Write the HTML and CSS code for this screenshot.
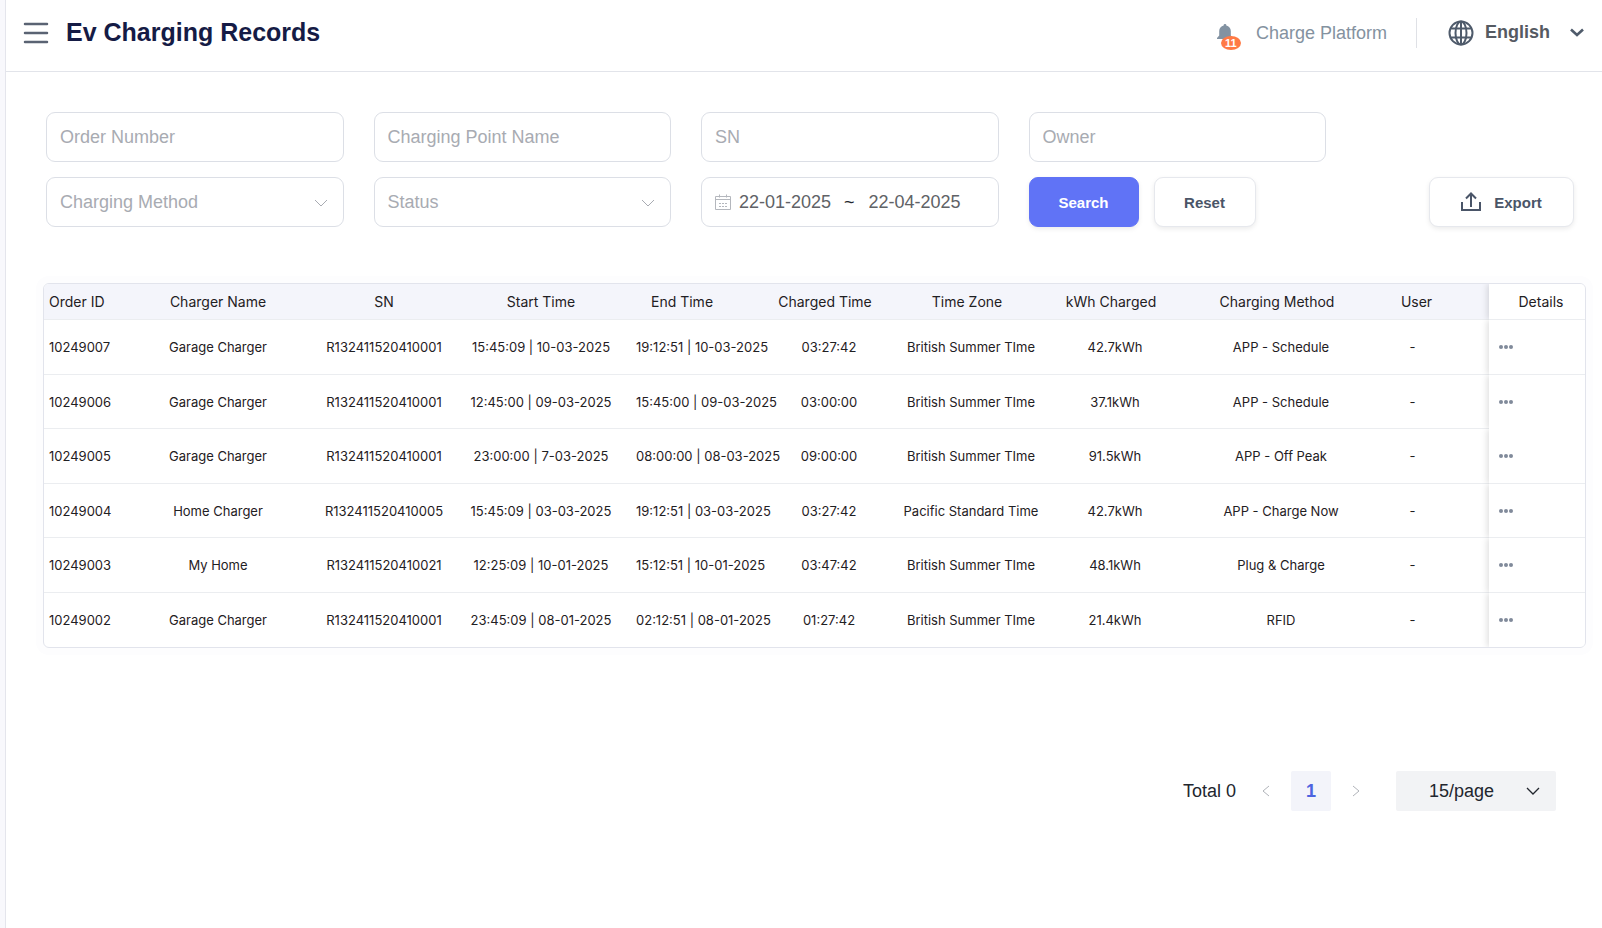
FILE: index.html
```
<!DOCTYPE html>
<html lang="en">
<head>
  <meta charset="UTF-8" />
  <meta name="viewport" content="width=device-width, initial-scale=1.0" />
  <title>Ev Charging Records</title>
  <link rel="stylesheet" href="styles.css">
</head>
<body>
  <header class="topbar">
    <button class="icon-btn menu-btn" aria-label="Toggle menu">
      <svg width="26" height="22" viewBox="0 0 26 22" fill="none" stroke="#5a6373" stroke-width="2.500" stroke-linecap="round"><path d="M2 2h22M2 11h22M2 20h22"/></svg>
    </button>
    <h1>Ev Charging Records</h1>
    <button class="icon-btn bell" aria-label="Notifications">
      <svg width="18" height="18" viewBox="0 0 18 18" fill="#8292a2"><path d="M9 0a1.3 1.3 0 0 1 1.3 1.5C13 2 14.800 4.300 14.800 7v4.600L17 14v1H1v-1l2.200-2.400V7C3.200 4.300 5 2 7.700 1.500A1.300 1.300 0 0 1 9 0z"/></svg>
      <span class="badge">11</span>
    </button>
    <a href="#" class="account">Charge Platform</a>
    <button class="icon-btn language">
      <svg width="26" height="26" viewBox="0 0 26 26" fill="none" stroke="#4f5b6b" stroke-width="2"><circle cx="13" cy="13" r="11.500"/><ellipse cx="13" cy="13" rx="5.500" ry="11.500"/><path d="M13 1.500v23M2.500 8.500h21M2.500 17.500h21"/></svg>
      <span>English</span>
      <svg class="caret" width="14" height="10" viewBox="0 0 14 10" fill="none" stroke="#4f5b6b" stroke-width="2.600"><path d="M1 1.500l6 5.500 6-5.500"/></svg>
    </button>
  </header>

  <main>
    <form class="filters" onsubmit="return false">
      <input type="text" class="field" placeholder="Order Number" aria-label="Order Number" />
      <input type="text" class="field" placeholder="Charging Point Name" aria-label="Charging Point Name" />
      <input type="text" class="field" placeholder="SN" aria-label="SN" />
      <input type="text" class="field" placeholder="Owner" aria-label="Owner" />

      <div class="select-wrap first-col">
        <select class="field" aria-label="Charging Method">
          <option>Charging Method</option>
        </select>
        <svg width="14" height="8" viewBox="0 0 14 8" fill="none" stroke="#a8abb2"><path d="M1 1l6 6 6-6"/></svg>
      </div>
      <div class="select-wrap">
        <select class="field" aria-label="Status">
          <option>Status</option>
        </select>
        <svg width="14" height="8" viewBox="0 0 14 8" fill="none" stroke="#a8abb2"><path d="M1 1l6 6 6-6"/></svg>
      </div>
      <div class="field date-range">
        <svg width="16" height="16" viewBox="0 0 16 16" fill="none" stroke="#b4b7bd"><path d="M.5 2.500h15v13h-15zM.5 5.500h15M4.500 .5v3M11.500 .5v3M4 9.500h2M7 9.500h2M10 9.500h2M4 12.500h2M7 12.500h2M10 12.500h2"/></svg>
        <input type="text" value="22-01-2025" aria-label="Start date" />
        <span>~</span>
        <input type="text" value="22-04-2025" aria-label="End date" />
      </div>
      <div class="actions">
        <button class="btn btn-primary">Search</button>
        <button class="btn btn-reset" type="reset">Reset</button>
      </div>
      <button class="btn btn-export" type="button">
        <svg width="20" height="20" viewBox="0 0 20 20" fill="none" stroke="#4a5568" stroke-width="2"><path d="M1 10v8h18v-8M10 15V2M5 6.500L10 1.500l5 5"/></svg>
        Export
      </button>
    </form>

    <div class="table-card">
      <table>
        <colgroup>
          <col class="c-id"><col class="c-name"><col class="c-sn"><col class="c-start"><col class="c-end"><col class="c-charged"><col class="c-zone"><col class="c-kwh"><col class="c-method"><col class="c-user"><col class="c-details">
        </colgroup>
        <thead>
          <tr>
            <th>Order ID</th>
            <th>Charger Name</th>
            <th>SN</th>
            <th>Start Time</th>
            <th class="end">End Time</th>
            <th class="shift">Charged Time</th>
            <th class="shift">Time Zone</th>
            <th class="shift">kWh Charged</th>
            <th class="shift">Charging Method</th>
            <th class="user">User</th>
            <th class="details">Details</th>
          </tr>
        </thead>
        <tbody>
          <tr>
            <td>10249007</td><td>Garage Charger</td><td>R132411520410001</td><td>15:45:09 | 10-03-2025</td><td class="end">19:12:51 | 10-03-2025</td><td>03:27:42</td><td>British Summer TIme</td><td>42.7kWh</td><td>APP - Schedule</td><td class="user">-</td>
            <td class="details"><button class="more" aria-label="Details"><i></i><i></i><i></i></button></td>
          </tr>
          <tr class="open-row">
            <td>10249006</td><td>Garage Charger</td><td>R132411520410001</td><td>12:45:00 | 09-03-2025</td><td class="end">15:45:00 | 09-03-2025</td><td>03:00:00</td><td>British Summer TIme</td><td>37.1kWh</td><td>APP - Schedule</td><td class="user">-</td>
            <td class="details"><button class="more" aria-label="Details"><i></i><i></i><i></i></button></td>
          </tr>
          <tr>
            <td>10249005</td><td>Garage Charger</td><td>R132411520410001</td><td>23:00:00 | 7-03-2025</td><td class="end">08:00:00 | 08-03-2025</td><td>09:00:00</td><td>British Summer TIme</td><td>91.5kWh</td><td>APP - Off Peak</td><td class="user">-</td>
            <td class="details"><button class="more" aria-label="Details"><i></i><i></i><i></i></button></td>
          </tr>
          <tr>
            <td>10249004</td><td>Home Charger</td><td>R132411520410005</td><td>15:45:09 | 03-03-2025</td><td class="end">19:12:51 | 03-03-2025</td><td>03:27:42</td><td>Pacific Standard Time</td><td>42.7kWh</td><td>APP - Charge Now</td><td class="user">-</td>
            <td class="details"><button class="more" aria-label="Details"><i></i><i></i><i></i></button></td>
          </tr>
          <tr>
            <td>10249003</td><td>My Home</td><td>R132411520410021</td><td>12:25:09 | 10-01-2025</td><td class="end">15:12:51 | 10-01-2025</td><td>03:47:42</td><td>British Summer TIme</td><td>48.1kWh</td><td>Plug &amp; Charge</td><td class="user">-</td>
            <td class="details"><button class="more" aria-label="Details"><i></i><i></i><i></i></button></td>
          </tr>
          <tr>
            <td>10249002</td><td>Garage Charger</td><td>R132411520410001</td><td>23:45:09 | 08-01-2025</td><td class="end">02:12:51 | 08-01-2025</td><td>01:27:42</td><td>British Summer TIme</td><td>21.4kWh</td><td>RFID</td><td class="user">-</td>
            <td class="details"><button class="more" aria-label="Details"><i></i><i></i><i></i></button></td>
          </tr>
        </tbody>
      </table>
    </div>

    <nav class="pagination" aria-label="Pagination">
      <span class="total">Total 0</span>
      <button class="page-arrow" aria-label="Previous page">
        <svg width="8" height="12" viewBox="0 0 8 12" fill="none" stroke="#b0b3b9"><path d="M7 1L1 6l6 5"/></svg>
      </button>
      <button class="page-num">1</button>
      <button class="page-arrow" aria-label="Next page">
        <svg width="8" height="12" viewBox="0 0 8 12" fill="none" stroke="#b0b3b9"><path d="M1 1l6 5-6 5"/></svg>
      </button>
      <div class="page-size">
        <select aria-label="Rows per page">
          <option>15/page</option>
        </select>
        <svg width="14" height="8" viewBox="0 0 14 8" fill="none" stroke="#22262e" stroke-width="1.300"><path d="M1 1l6 6 6-6"/></svg>
      </div>
    </nav>
  </main>
</body>
</html>
```
FILE: styles.css
```
* {
  box-sizing: border-box;
}
html {
  background: #f8f8fc;
}
body {
  margin: 0 0 0 5px;
  min-height: 100vh;
  border-left: 1px solid #e4e5ec;
  background: #fff;
  font-family: "Liberation Sans", Arial, sans-serif;
  font-size: 18px;
  color: #22262e;
}
button, input, select {
  font-family: inherit;
  font-size: inherit;
}

/* top bar */
.topbar {
  display: flex;
  align-items: center;
  height: 72px;
  padding: 0 18px 6px 17px;
  border-bottom: 1px solid #e2e4ea;
}
h1 {
  margin: 0 auto 0 17px;
  font-size: 25px;
  color: #151b45;
}
.icon-btn {
  padding: 0;
  border: none;
  background: none;
  cursor: pointer;
}
.menu-btn svg {
  display: block;
}
.bell {
  position: relative;
  margin-right: 22px;
}
.bell svg {
  display: block;
}
.badge {
  position: absolute;
  left: 5px;
  top: 12px;
  width: 20px;
  height: 14px;
  border-radius: 50%;
  background: #ff7a45;
  color: #fff;
  font-size: 11px;
  font-weight: bold;
  line-height: 14px;
}
.account {
  padding-right: 29px;
  border-right: 1px solid #dfe1e6;
  line-height: 30px;
  color: #8492a0;
  text-decoration: none;
}
.language {
  display: flex;
  align-items: center;
  margin-left: 31px;
  font-weight: bold;
  color: #555a62;
}
.language span {
  margin: 0 20px 0 11px;
}

/* filters */
.filters {
  display: grid;
  grid-template-columns: repeat(4, minmax(0, 1fr)) 218px;
  gap: 15px 30px;
  padding: 40px 28px 0 40px;
}
.field {
  width: 100%;
  height: 50px;
  padding: 0 13px;
  border: 1px solid #dcdfe6;
  border-radius: 9px;
  background: #fff;
  color: #a8abb2;
}
.field::placeholder {
  color: #a8abb2;
}
.first-col {
  grid-column: 1;
}
.select-wrap, .page-size {
  position: relative;
}
select {
  appearance: none;
}
.select-wrap svg {
  position: absolute;
  right: 16px;
  top: 22px;
  pointer-events: none;
}
.date-range {
  display: flex;
  align-items: center;
  color: #22262e;
}
.date-range input {
  width: 94px;
  padding: 0;
  border: none;
  color: #606266;
}
.date-range svg {
  margin-right: 8px;
}
.date-range span {
  margin: 0 14px 0 11px;
}
.actions {
  display: flex;
  gap: 15px;
}
.btn {
  height: 50px;
  border: 1px solid #e6e8ed;
  border-radius: 9px;
  background: #fff;
  box-shadow: 0 2px 5px rgba(0, 0, 0, 0.08);
  color: #4a5568;
  font-size: 15px;
  font-weight: bold;
  cursor: pointer;
}
.btn-primary {
  width: 110px;
  border-color: #6073f6;
  background: #6073f6;
  color: #fff;
}
.btn-reset {
  width: 102px;
}
.btn-export {
  display: flex;
  align-items: center;
  justify-content: center;
  gap: 13px;
  width: 145px;
  justify-self: end;
}

/* records table */
.table-card {
  margin: 56px 16px 0 37px;
  border: 1px solid #e2e4ec;
  border-radius: 6px;
  box-shadow: 0 0 0 7px #fdfdfe;
  overflow: hidden;
}
table {
  width: 100%;
  table-layout: fixed;
  border-collapse: separate;
  border-spacing: 0;
  font-family: Inter, sans-serif;
  font-size: 13px;
  color: #1f2023;
}
.c-id { width: 94px; }
.c-name { width: 160px; }
.c-sn { width: 172px; }
.c-start { width: 142px; }
.c-end { width: 164px; }
.c-charged { width: 106px; }
.c-zone { width: 178px; }
.c-kwh { width: 110px; }
.c-method { width: 222px; }
.c-user { width: 97px; }
.c-details { width: 96px; }
th, td {
  padding: 0;
  border-bottom: 1px solid #ebedf0;
  text-align: center;
  white-space: nowrap;
}
th {
  height: 36px;
  background: #f4f5fb;
  font-size: 14px;
  font-weight: normal;
}
td {
  height: 55px;
}
tr:nth-child(even) td {
  height: 54px;
}
tr:last-child td {
  border-bottom: none;
}
th:first-child, td:first-child {
  padding-left: 5px;
  text-align: left;
}
td.end {
  padding-left: 24px;
  text-align: left;
}
th.end {
  padding-left: 39px;
  text-align: left;
}
.shift {
  padding-right: 8px;
}
td.user {
  padding-right: 56px;
}
th.user {
  padding-right: 48px;
}
.details {
  position: relative;
  background: #fff;
  box-shadow: -2px 0 6px rgba(0, 0, 0, 0.12);
  clip-path: inset(0 0 0 -8px);
}
th.details {
  padding-left: 8px;
}
td.details {
  padding-left: 10px;
  text-align: left;
}
.open-row .details {
  border-bottom-color: transparent;
}
.more {
  display: flex;
  gap: 1px;
  padding: 0;
  border: none;
  background: none;
  cursor: pointer;
}
.more i {
  width: 4px;
  height: 4px;
  border-radius: 50%;
  background: #808a9a;
}

/* pagination */
.pagination {
  display: flex;
  align-items: center;
  justify-content: flex-end;
  margin-top: 123px;
  padding-right: 46px;
}
.page-arrow {
  display: flex;
  justify-content: center;
  width: 50px;
  padding: 0;
  border: none;
  background: none;
}
.total {
  margin-right: 5px;
}
.page-num {
  width: 40px;
  height: 40px;
  border: none;
  border-radius: 2px;
  background: #f3f4fa;
  color: #4d63e0;
  font-weight: bold;
}
.page-size {
  margin-left: 15px;
}
.page-size select {
  width: 160px;
  height: 40px;
  padding: 0 33px;
  border: none;
  border-radius: 2px;
  background: #f2f3f5;
  color: #22262e;
}
.page-size svg {
  position: absolute;
  right: 16px;
  top: 16px;
  pointer-events: none;
}
```
